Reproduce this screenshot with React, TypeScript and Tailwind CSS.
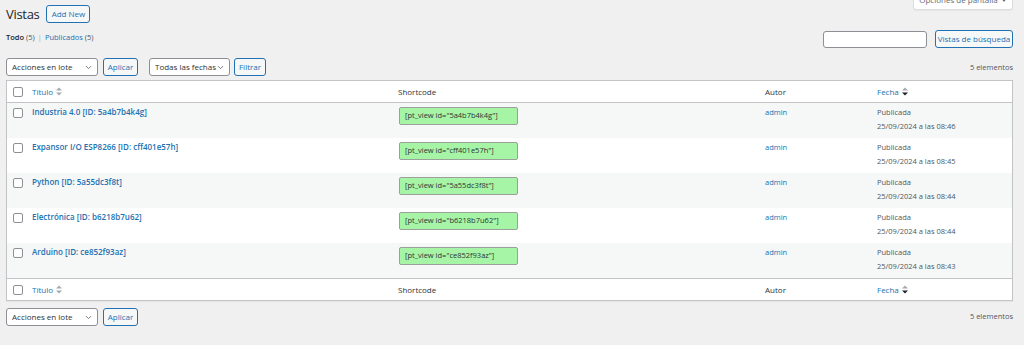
import { ChevronDown } from 'lucide-react';

const rows = [
  { title: 'Industria 4.0', id: '5a4b7b4k4g', time: '08:46' },
  { title: 'Expansor I/O ESP8266', id: 'cff401e57h', time: '08:45' },
  { title: 'Python', id: '5a55dc3f8t', time: '08:44' },
  { title: 'Electrónica', id: 'b6218b7u62', time: '08:44' },
  { title: 'Arduino', id: 'ce852f93az', time: '08:43' },
];

const cols = 'grid grid-cols-[19px_366px_367px_112px_1fr]';

function Checkbox() {
  return <span className="block h-[10px] w-[10px] rounded-[2px] border border-[#8c8f94] bg-white" />;
}

function SortIcon({ desc }: { desc?: boolean }) {
  return (
    <svg width="6" height="9" viewBox="0 0 6 9" className="ml-[3px] inline-block">
      <path d="M0 3.6 L3 0.6 L6 3.6 Z" fill="#a7aaad" />
      <path d="M0 5.4 L3 8.4 L6 5.4 Z" fill={desc ? '#1d2327' : '#a7aaad'} />
    </svg>
  );
}

function Select({ label, width }: { label: string; width: string }) {
  return (
    <div
      className={`flex h-[18px] items-center justify-between rounded-[3px] border border-[#8c8f94] bg-white pl-[5px] pr-[4px] text-[8px] text-[#2c3338] ${width}`}
    >
      <span>{label}</span>
      <ChevronDown size={9} strokeWidth={2} className="text-[#50575e]" />
    </div>
  );
}

function Button({ label, width }: { label: string; width: string }) {
  return (
    <div
      className={`flex h-[18px] items-center justify-center rounded-[3px] border border-[#2271b1] bg-[#f6f7f7] text-[8px] text-[#2271b1] ${width}`}
    >
      {label}
    </div>
  );
}

function HeaderRow({ top }: { top?: boolean }) {
  return (
    <div
      className={`${cols} h-[22px] items-center bg-white text-[8px] text-[#2c3338] ${top ? 'border-b border-[#c3c4c7]' : 'border-t border-[#c3c4c7]'}`}
    >
      <div className="pl-[6px]">
        <Checkbox />
      </div>
      <div className="flex items-center pl-[6px] text-[#2271b1]">
        Título
        <SortIcon />
      </div>
      <div className="pl-[6px]">Shortcode</div>
      <div className="pl-[6px]">Autor</div>
      <div className="flex items-center pl-[6px] text-[#2271b1]">
        Fecha
        <SortIcon desc />
      </div>
    </div>
  );
}

export default function App() {
  return (
    <div
      className="min-h-[345px] bg-[#f0f0f1] pl-[6px] pr-[11px] text-[8px] text-[#3c434a]"
      style={{ fontFamily: '"Open Sans", "Noto Sans", sans-serif' }}
    >
      <div className="flex items-start justify-between">
        <div className="flex items-center gap-[7px] pt-[5px]">
          <h1 className="text-[13px] leading-[18px] tracking-[-0.3px] text-[#1d2327]">Vistas</h1>
          <div className="flex h-[18px] w-[44px] items-center justify-center rounded-[3px] border border-[#2271b1] bg-[#f6f7f7] text-[8px] text-[#2271b1]">
            Add New
          </div>
        </div>
        <div className="-mt-[10px] flex h-[20px] w-[100px] items-center justify-center gap-[3px] rounded-b-[3px] border border-[#dcdcde] bg-white text-[8px] text-[#646970] shadow-[0_1px_1px_rgba(0,0,0,0.04)]">
          Opciones de pantalla
          <svg width="6" height="4" viewBox="0 0 6 4">
            <path d="M0 0 L6 0 L3 4 Z" fill="#646970" />
          </svg>
        </div>
      </div>

      <div className="mt-[7px] flex items-center justify-between">
        <div className="-mt-[2px] flex items-center gap-[2px] text-[7.5px]">
          <span className="font-semibold text-[#1d2327]">Todo</span>
          <span className="text-[#50575e]">(5)</span>
          <span className="mx-[1px] text-[#a7aaad]">|</span>
          <span className="text-[#2271b1]">Publicados</span>
          <span className="text-[#50575e]">(5)</span>
        </div>
        <div className="flex items-center gap-[8px]">
          <div className="h-[17px] w-[104px] rounded-[3px] border border-[#8c8f94] bg-white" />
          <Button label="Vistas de búsqueda" width="w-[78px] h-[17px]" />
        </div>
      </div>

      <div className="mt-[10px] flex h-[18px] items-center justify-between">
        <div className="flex items-center">
          <Select label="Acciones en lote" width="w-[92px]" />
          <div className="ml-[5px]">
            <Button label="Aplicar" width="w-[35px]" />
          </div>
          <div className="ml-[11px]">
            <Select label="Todas las fechas" width="w-[81px]" />
          </div>
          <div className="ml-[4px]">
            <Button label="Filtrar" width="w-[32px]" />
          </div>
        </div>
        <span className="pt-[2px] text-[7.5px] text-[#50575e]">5 elementos</span>
      </div>

      <div className="mt-[4px] border border-[#c3c4c7] bg-white shadow-[0_1px_1px_rgba(0,0,0,0.04)]">
        <HeaderRow top />
        {rows.map((r, i) => (
          <div key={r.id} className={`${cols} h-[35px] ${i % 2 === 0 ? 'bg-[#f6f7f7]' : 'bg-white'}`}>
            <div className="pl-[6px] pt-[5px]">
              <Checkbox />
            </div>
            <div className="pl-[6px] pt-[3px] text-[8px] font-semibold leading-[12px] text-[#2271b1]">
              {r.title} [ID: {r.id}]
            </div>
            <div className="pl-[7px] pt-[4px]">
              <div className="flex h-[18px] w-[119px] items-center rounded-[2px] border border-[#9aa19a] bg-[#a6f5a6] pl-[5px] text-[7.5px] text-[#2c3338]">
                [pt_view id="{r.id}"]
              </div>
            </div>
            <div className="pl-[6px] pt-[3px] text-[7.5px] leading-[12px] text-[#2271b1]">admin</div>
            <div className="pl-[6px] pt-[2px] text-[7.5px] leading-[14px] text-[#50575e]">
              <div>Publicada</div>
              <div>25/09/2024 a las {r.time}</div>
            </div>
          </div>
        ))}
        <HeaderRow />
      </div>

      <div className="mt-[7px] flex h-[18px] items-center justify-between">
        <div className="flex items-center">
          <Select label="Acciones en lote" width="w-[92px]" />
          <div className="ml-[5px]">
            <Button label="Aplicar" width="w-[35px]" />
          </div>
        </div>
        <span className="text-[7.5px] text-[#50575e]">5 elementos</span>
      </div>
    </div>
  );
}
